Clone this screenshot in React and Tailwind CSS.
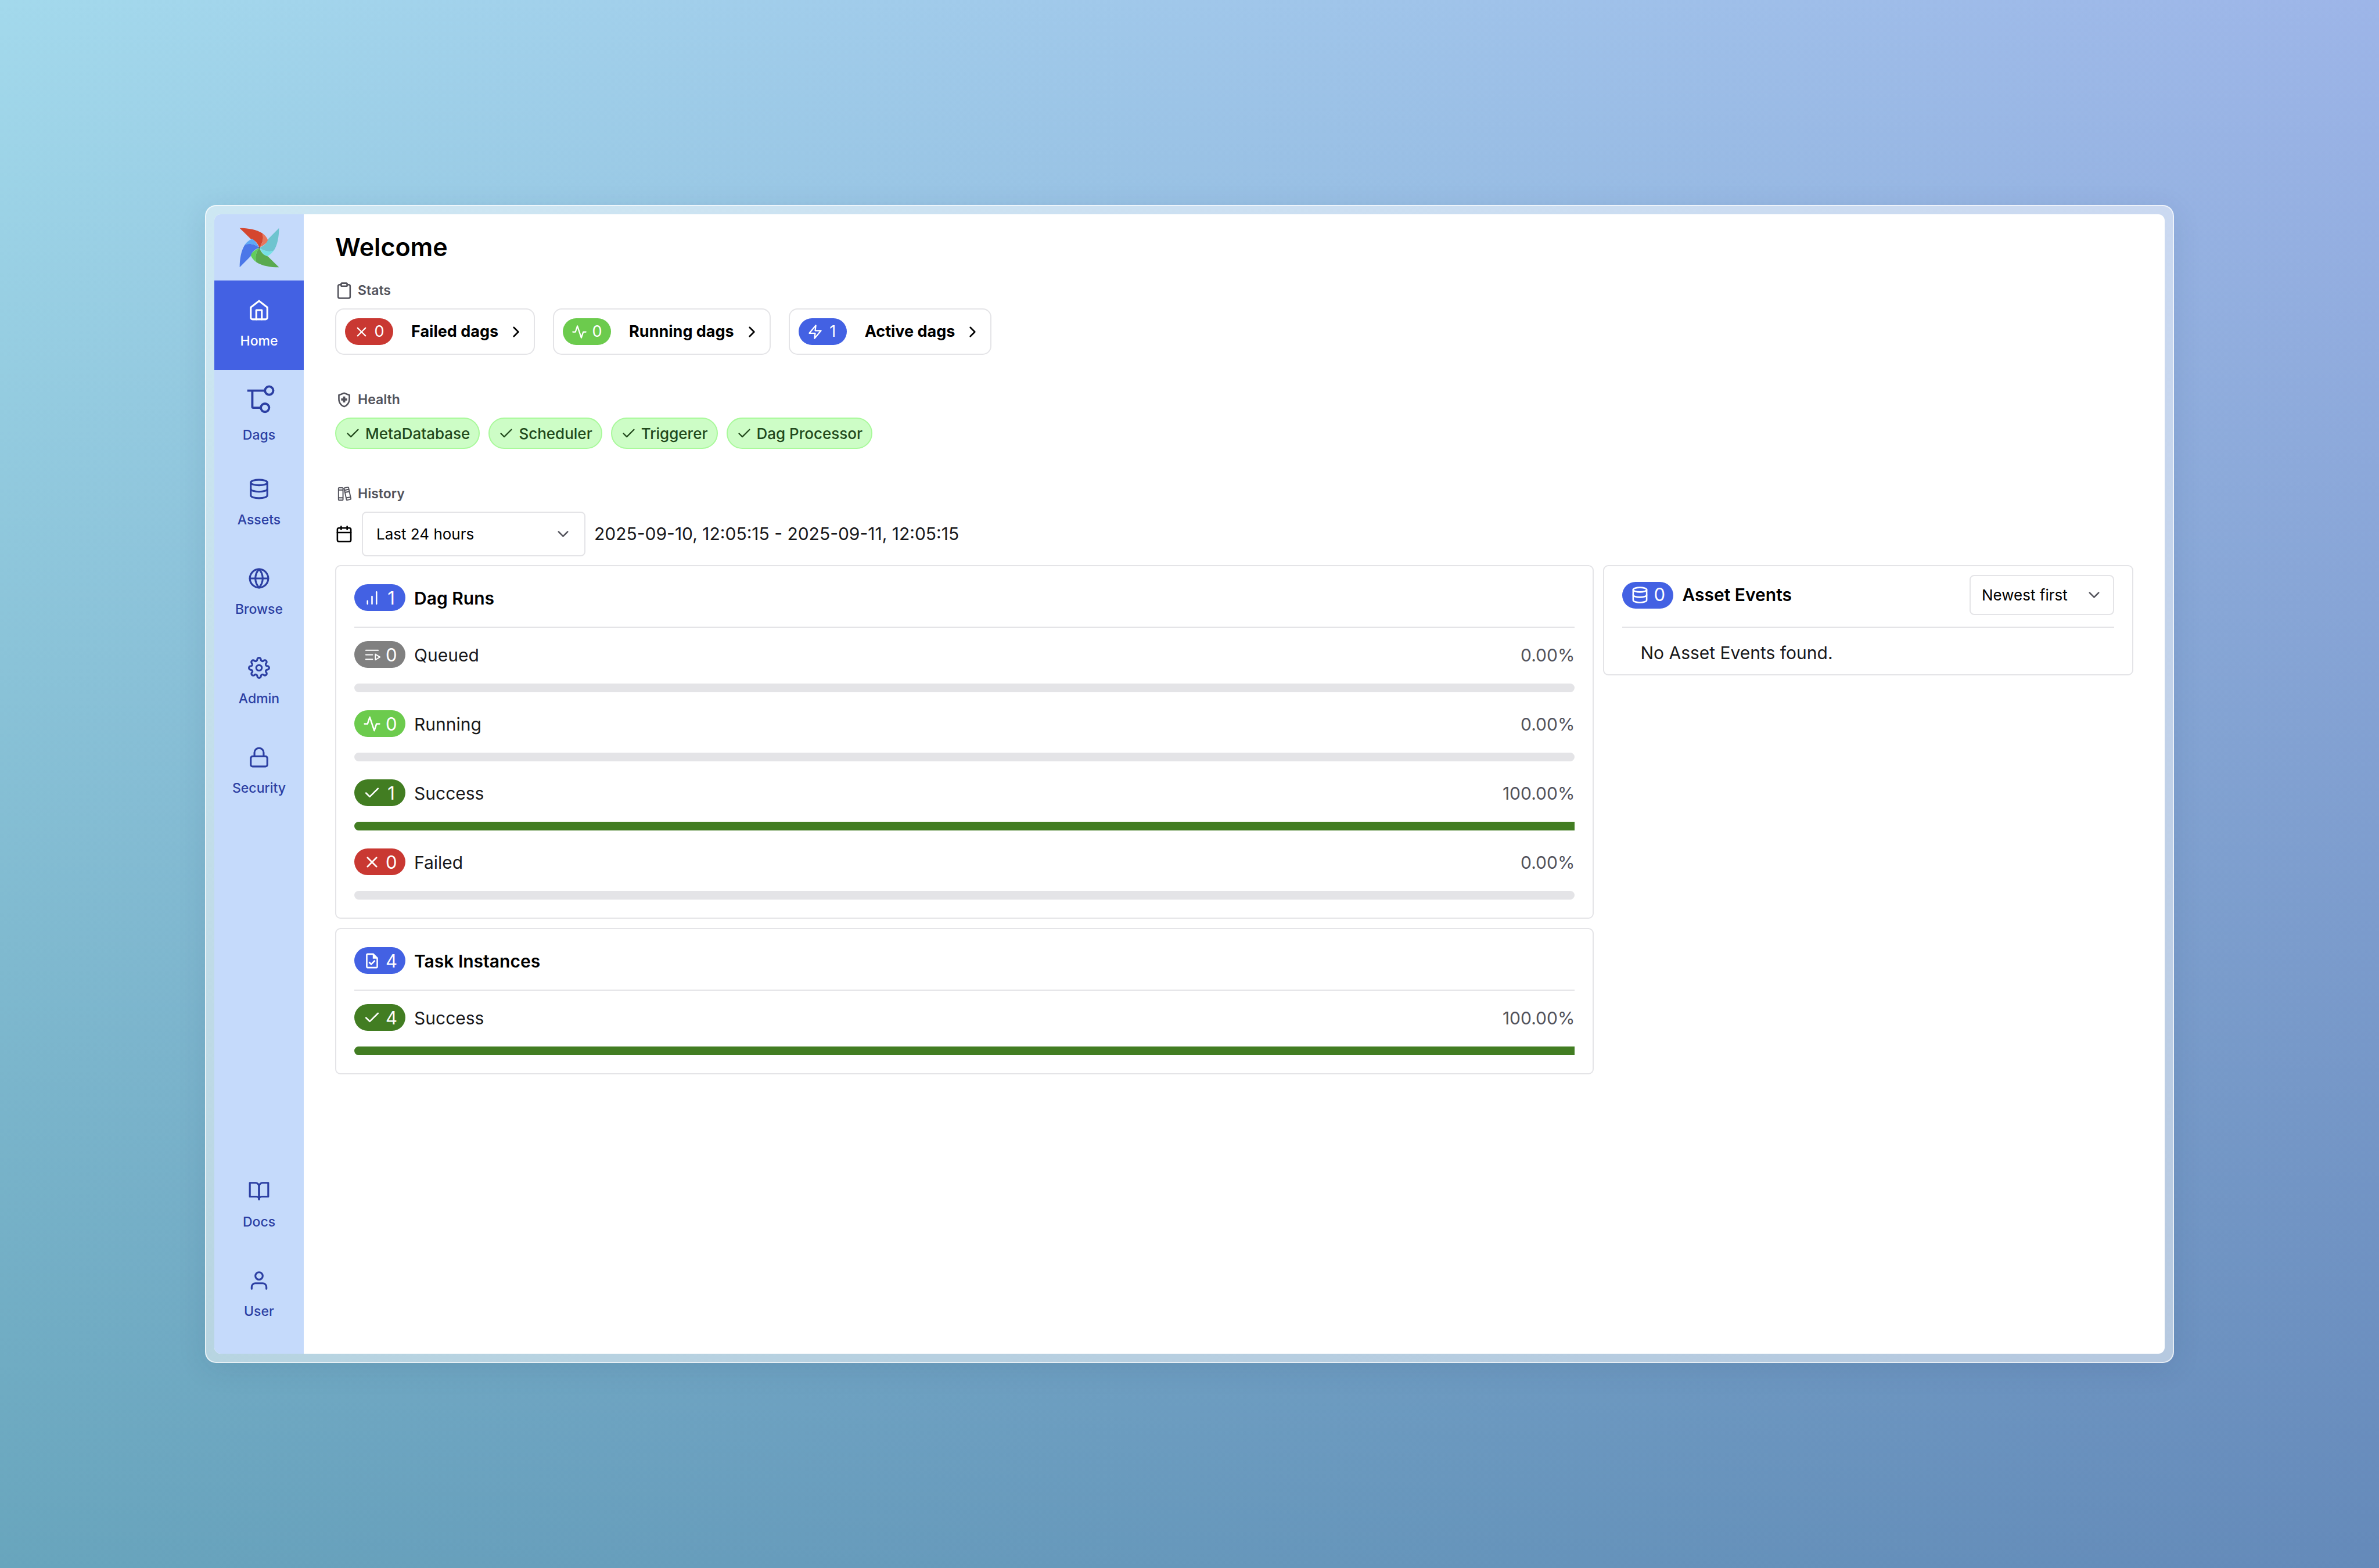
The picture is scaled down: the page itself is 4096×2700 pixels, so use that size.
import {
  FiActivity,
  FiBarChart,
  FiBookOpen,
  FiCalendar,
  FiCheck,
  FiChevronDown,
  FiChevronRight,
  FiClipboard,
  FiDatabase,
  FiGlobe,
  FiHome,
  FiLock,
  FiSettings,
  FiUser,
  FiX,
  FiZap,
} from "react-icons/fi";
import { MdOutlineHealthAndSafety, MdOutlineTask } from "react-icons/md";
import { PiBooks, PiQueue } from "react-icons/pi";

const BLADES = [
  { angle: 0, dark: "#d4462e", light: "#e6775c" },
  { angle: 90, dark: "#6ec4cf", light: "#77e1e6" },
  { angle: 180, dark: "#5aaa50", light: "#62ce5c" },
  { angle: 270, dark: "#4b77e8", light: "#5ea8f4" },
];

function Pinwheel() {
  return (
    <svg viewBox="-108 -108 216 216" className="size-[69px]" aria-hidden="true">
      {BLADES.map((b) => (
        <g key={b.angle} transform={`rotate(${b.angle})`}>
          <path
            fill={b.dark}
            d="M-106-106C-60-106-15-98 16-78 26-50 16-20 0 0-8-22-20-40-46-47Z"
          />
          <path
            fill={b.light}
            d="M16-78C32-66 44-52 47-36 30-16 14-8 0 0 16-20 26-50 16-78Z"
          />
        </g>
      ))}
      <circle r="4" fill="#5f5a58" />
    </svg>
  );
}

function DagIcon({ className }) {
  return (
    <svg
      viewBox="0 0 28 28"
      className={className}
      fill="none"
      stroke="currentColor"
      strokeWidth="2"
      aria-hidden="true"
    >
      <path d="M3.5 6H19M8 6V20.3a1 1 0 0 0 1 1H15.5" />
      <circle cx="23" cy="6" r="3.7" />
      <circle cx="19.3" cy="21.3" r="3.7" />
    </svg>
  );
}

const NAV = [
  { label: "Home", Icon: FiHome, active: true },
  { label: "Dags", Icon: DagIcon, big: true },
  { label: "Assets", Icon: FiDatabase },
  { label: "Browse", Icon: FiGlobe },
  { label: "Admin", Icon: FiSettings },
  { label: "Security", Icon: FiLock },
];

const NAV_BOTTOM = [
  { label: "Docs", Icon: FiBookOpen },
  { label: "User", Icon: FiUser },
];

function NavItem({ label, Icon, active, big }) {
  return (
    <a
      href="#"
      className={
        "flex h-[154px] w-full flex-col items-center justify-center gap-[19px] pb-[3px] text-[23px] leading-[31px] font-medium " +
        (active ? "bg-[#4361e3] text-white" : "text-[#2c3fa3]")
      }
    >
      <Icon className={big ? "size-[54px]" : "size-[38px]"} />
      {label}
    </a>
  );
}

function SectionLabel({ Icon, children }) {
  return (
    <h2 className="flex items-center gap-2 text-[23px] leading-8 font-semibold text-[#52525b]">
      <Icon className="size-[31px]" />
      {children}
    </h2>
  );
}

function StatCard({ Icon, color, count, label }) {
  return (
    <a
      href="#"
      className="flex h-20 items-center rounded-[15px] border-2 border-[#e4e4e7] px-[15px] text-[27px] text-black"
    >
      <span
        className={
          "flex h-[46px] items-center gap-2 rounded-full px-[15px] text-white " +
          color
        }
      >
        <Icon className="size-[27px]" />
        <span className="w-[18px] text-center">{count}</span>
      </span>
      <span className="ml-[31px] font-bold">{label}</span>
      <FiChevronRight className="ml-[15px] size-[31px]" />
    </a>
  );
}

function HealthBadge({ children }) {
  return (
    <span className="flex h-[54px] items-center gap-2 rounded-full border-2 border-[#a9f99b] bg-[#cdfdc6] px-[15px] text-[26px] font-medium text-[#22491c]">
      <FiCheck className="size-[27px]" />
      {children}
    </span>
  );
}

function StateBadge({ Icon, color, count }) {
  return (
    <span
      className={
        "flex h-[46px] items-center gap-2 rounded-full px-[15px] text-[31px] text-white " +
        color
      }
    >
      <Icon className="size-[31px]" />
      <span className="w-[19px] text-center">{count}</span>
    </span>
  );
}

function Select({ label, value, className, chevron }) {
  return (
    <div className="relative">
      <select
        aria-label={label}
        defaultValue={value}
        className={
          "appearance-none rounded-[8px] border-2 border-[#e4e4e7] bg-white text-[26px] text-black " +
          className
        }
      >
        <option>{value}</option>
      </select>
      <FiChevronDown
        className={
          "pointer-events-none absolute inset-y-0 my-auto size-[31px] text-[#52525b] " +
          chevron
        }
      />
    </div>
  );
}

function MetricRow({ Icon, color, count, label, percent }) {
  return (
    <div>
      <div className="flex h-[46px] items-end gap-[15px] text-[30px] leading-[43px]">
        <StateBadge Icon={Icon} color={color} count={count} />
        <span className="text-[#18181b]">{label}</span>
        <span className="ml-auto text-[#52525b]">{percent.toFixed(2)}%</span>
      </div>
      <div className="mt-[27px] h-[15px] rounded-full bg-[#e4e4e7]">
        {percent > 0 && (
          <div
            className={"h-full rounded-l-full " + color}
            style={{ width: `${percent}%` }}
          />
        )}
      </div>
    </div>
  );
}

function MetricPanel({ Icon, count, title, rows }) {
  return (
    <section className="rounded-[9px] border-2 border-[#e4e4e7] p-[31px]">
      <div className="flex items-end gap-[15px] border-b-2 border-[#e4e4e7] pb-[27px] text-[30px] leading-[43px]">
        <StateBadge Icon={Icon} color="bg-[#4361e3]" count={count} />
        <h3 className="font-semibold">{title}</h3>
      </div>
      <div className="mt-[23px] flex flex-col gap-[31px]">
        {rows.map((r) => (
          <MetricRow key={r.label} {...r} />
        ))}
      </div>
    </section>
  );
}

const DAG_RUN_ROWS = [
  { label: "Queued", Icon: PiQueue, color: "bg-[#808080]", count: 0, percent: 0 },
  { label: "Running", Icon: FiActivity, color: "bg-[#6ccb4d]", count: 0, percent: 0 },
  { label: "Success", Icon: FiCheck, color: "bg-[#427d22]", count: 1, percent: 100 },
  { label: "Failed", Icon: FiX, color: "bg-[#c93832]", count: 0, percent: 0 },
];

const TASK_ROWS = [
  { label: "Success", Icon: FiCheck, color: "bg-[#427d22]", count: 4, percent: 100 },
];

export default function App() {
  return (
    <div className="flex min-h-screen bg-[linear-gradient(to_bottom,#ffffff,#a3c2cc),linear-gradient(to_right,#a3d9ec,#9db5e8)] p-[353px] font-[Inter,sans-serif] text-black bg-blend-multiply">
      <div className="flex flex-1 rounded-[19px] border-2 border-white/65 bg-white/50 p-[14px] shadow-[0_10px_50px_rgba(30,50,90,0.1)]">
        <div className="flex flex-1 overflow-hidden rounded-[11px] bg-white">
          <nav className="flex w-[154px] shrink-0 flex-col bg-[#c5dafb] pb-[23px]">
            <div className="flex h-[114px] items-center justify-center">
              <Pinwheel />
            </div>
            {NAV.map((n) => (
              <NavItem key={n.label} {...n} />
            ))}
            <div className="mt-auto">
              {NAV_BOTTOM.map((n) => (
                <NavItem key={n.label} {...n} />
              ))}
            </div>
          </nav>

          <main className="min-w-0 flex-1 px-[54px] pt-[26px]">
            <h1 className="text-[43px] leading-[60px] font-semibold">Welcome</h1>

            <div className="mt-[29px] flex flex-col gap-[15px]">
              <SectionLabel Icon={FiClipboard}>Stats</SectionLabel>
              <div className="flex gap-[31px]">
                <StatCard Icon={FiX} color="bg-[#c93832]" count={0} label="Failed dags" />
                <StatCard Icon={FiActivity} color="bg-[#6ccb4d]" count={0} label="Running dags" />
                <StatCard Icon={FiZap} color="bg-[#4361e3]" count={1} label="Active dags" />
              </div>
            </div>

            <div className="mt-[61px] flex flex-col gap-[15px]">
              <SectionLabel Icon={MdOutlineHealthAndSafety}>Health</SectionLabel>
              <div className="flex gap-[15px]">
                <HealthBadge>MetaDatabase</HealthBadge>
                <HealthBadge>Scheduler</HealthBadge>
                <HealthBadge>Triggerer</HealthBadge>
                <HealthBadge>Dag Processor</HealthBadge>
              </div>
            </div>

            <div className="mt-[61px] flex flex-col gap-[15px]">
              <SectionLabel Icon={PiBooks}>History</SectionLabel>
              <div className="flex items-center gap-[15px]">
                <FiCalendar className="size-[31px]" />
                <Select
                  label="Time range"
                  value="Last 24 hours"
                  className="h-[77px] w-[385px] pl-[23px]"
                  chevron="right-[23px]"
                />
                <span className="text-[30px] text-[#18181b]">
                  2025-09-10, 12:05:15 - 2025-09-11, 12:05:15
                </span>
              </div>
              <div className="grid grid-cols-[19fr_8fr] items-start gap-4">
                <div className="flex flex-col gap-4">
                  <MetricPanel Icon={FiBarChart} count={1} title="Dag Runs" rows={DAG_RUN_ROWS} />
                  <MetricPanel
                    Icon={MdOutlineTask}
                    count={4}
                    title="Task Instances"
                    rows={TASK_ROWS}
                  />
                </div>
                <section className="rounded-[9px] border-2 border-[#e4e4e7] px-[31px] pt-[15px]">
                  <div className="flex items-center gap-[15px] border-b-2 border-[#e4e4e7] pb-5 text-[30px]">
                    <StateBadge Icon={FiDatabase} color="bg-[#4361e3]" count={0} />
                    <h3 className="mr-auto font-semibold">Asset Events</h3>
                    <Select
                      label="Sort order"
                      value="Newest first"
                      className="h-[69px] w-[249px] pl-[19px]"
                      chevron="right-[19px]"
                    />
                  </div>
                  <p className="px-[31px] pt-5 pb-[14px] text-[30px] leading-[46px] text-[#18181b]">
                    No Asset Events found.
                  </p>
                </section>
              </div>
            </div>
          </main>
        </div>
      </div>
    </div>
  );
}
